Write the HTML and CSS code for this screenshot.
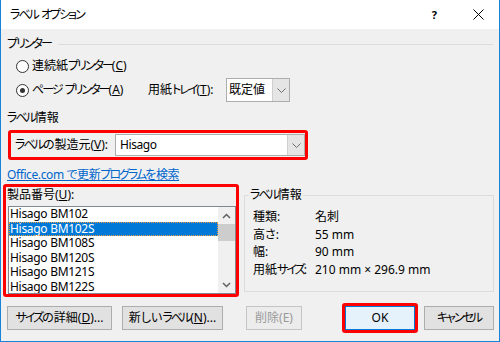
FILE: index.html
```html
<!DOCTYPE html>
<html lang="ja">
<head>
    <meta charset="UTF-8">
    <title>ラベル オプション</title>
    <link rel="stylesheet" href="styles.css">
</head>
<body>
    <div class="window">
        <div class="titlebar">
            <span class="title"><span class="k">ラベル</span> <span class="k">オプション</span></span>
            <span class="help">?</span>
            <svg class="close" width="11" height="11" viewBox="0 0 11 11">
                <path d="M0.5 0.5 L10.5 10.5 M10.5 0.5 L0.5 10.5" stroke="#000" stroke-width="1" fill="none"/>
            </svg>
        </div>

        <div class="content">
            <div class="group-head"><span class="k">プリンター</span></div>

            <div class="radio-row">
                <span class="radio"></span>
                <span class="radio-label">連続紙<span class="k">プリンター</span>(<u>C</u>)</span>
            </div>

            <div class="radio-row">
                <span class="radio checked"></span>
                <span class="radio-label"><span class="k">ページ</span> <span class="k">プリンター</span>(<u>A</u>)</span>
                <span class="tray-label">用紙<span class="k">トレイ</span>(<u>T</u>):</span>
                <div class="select tray">
                    <span class="value">既定値</span>
                    <span class="drop">
                        <svg width="9" height="5" viewBox="0 0 9 5"><path d="M0.5 0.5 L4.5 4.5 L8.5 0.5" stroke="#6d6d6d" fill="none"/></svg>
                    </span>
                </div>
            </div>

            <div class="section-label"><span class="k">ラベル</span>情報</div>

            <div class="mark maker">
                <span><span class="k">ラベル</span>の製造元(<u>V</u>):</span>
                <div class="select vendor">
                    <span class="value">Hisago</span>
                    <span class="drop">
                        <svg width="9" height="5" viewBox="0 0 9 5"><path d="M0.5 0.5 L4.5 4.5 L8.5 0.5" stroke="#6d6d6d" fill="none"/></svg>
                    </span>
                </div>
            </div>

            <a class="link" href="#">Office.com で更新<span class="k">プログラム</span>を検索</a>

            <div class="lower">
                <div class="mark product">
                    <div class="product-label">製品番号(<u>U</u>):</div>
                    <div class="listbox">
                        <div class="items">
                            <div class="item">Hisago BM102</div>
                            <div class="item selected">Hisago BM102S</div>
                            <div class="item">Hisago BM108S</div>
                            <div class="item">Hisago BM120S</div>
                            <div class="item">Hisago BM121S</div>
                            <div class="item">Hisago BM122S</div>
                        </div>
                        <div class="scrollbar">
                            <span class="arrow">
                                <svg width="9" height="6" viewBox="0 0 9 6"><path d="M1 5 L4.5 1.5 L8 5" stroke="#606060" stroke-width="1.5" fill="none"/></svg>
                            </span>
                            <span class="thumb"></span>
                            <span class="track"></span>
                            <span class="arrow">
                                <svg width="9" height="6" viewBox="0 0 9 6"><path d="M1 1 L4.5 4.5 L8 1" stroke="#606060" stroke-width="1.5" fill="none"/></svg>
                            </span>
                        </div>
                    </div>
                </div>

                <fieldset class="info">
                    <legend><span class="k">ラベル</span>情報</legend>
                    <div class="info-grid">
                        <span>種類:</span><span>名刺</span>
                        <span>高さ:</span><span>55 mm</span>
                        <span>幅:</span><span>90 mm</span>
                        <span>用紙<span class="k">サイズ</span>:</span><span>210 mm × 296.9 mm</span>
                    </div>
                </fieldset>
            </div>

            <div class="buttons">
                <button class="btn btn-details"><span class="k">サイズ</span>の詳細(<u>D</u>)...</button>
                <button class="btn btn-new">新しい<span class="k">ラベル</span>(<u>N</u>)...</button>
                <button class="btn btn-delete" disabled>削除(E)</button>
                <div class="mark ok-wrap">
                    <button class="btn btn-ok">OK</button>
                </div>
                <button class="btn btn-cancel"><span class="k">キャンセル</span></button>
            </div>
        </div>
    </div>
</body>
</html>
```

FILE: styles.css
```css
* {
    box-sizing: border-box;
}

body {
    margin: 0;
    font-family: "Noto Sans", "Noto Sans CJK JP", sans-serif;
    font-size: 12px;
    line-height: 16px;
    color: #000;
    font-feature-settings: "palt";
}

/* katakana runs: Meiryo UI draws them much narrower than Noto */
.k {
    letter-spacing: -2px;
}

u {
    text-decoration-thickness: 1px;
    text-underline-offset: 1px;
}

.window {
    width: 500px;
    height: 342px;
    border: 1px solid #1883d7;
    border-top: none;
    background: #f0f0f0;
    display: flex;
    flex-direction: column;
}

.titlebar {
    height: 29px;
    flex-shrink: 0;
    background: #fff;
    display: flex;
    align-items: center;
    padding: 0 15px 0 9px;
}

.title {
    flex: 1;
}

.help {
    margin-right: 36px;
    font-weight: bold;
    font-size: 11px;
}

.content {
    flex: 1;
    padding: 0 6px;
    display: flex;
    flex-direction: column;
}

.group-head {
    margin-top: 5px;
    height: 20px;
    display: flex;
    align-items: center;
    gap: 7px;
}

.group-head::after {
    content: "";
    flex: 1;
    border-top: 1px solid #dcdcdc;
}

.radio-row {
    height: 24px;
    display: flex;
    align-items: center;
    padding-left: 9px;
}

.radio {
    width: 13px;
    height: 13px;
    border: 1px solid #333;
    border-radius: 50%;
    background: #fff;
    margin-right: 3px;
    display: flex;
    align-items: center;
    justify-content: center;
}

.radio.checked::after {
    content: "";
    width: 5px;
    height: 5px;
    border-radius: 50%;
    background: #333;
}

.radio-label {
    width: 116px;
}

.tray-label {
    width: 78px;
}

.select {
    background: #fff;
    border: 1px solid #adadad;
    display: flex;
}

.select .value {
    flex: 1;
    display: flex;
    align-items: center;
}

.select .drop {
    width: 17px;
    background: #e5e5e5;
    border-left: 1px solid #cfcfcf;
    display: flex;
    align-items: center;
    justify-content: center;
}

.tray {
    width: 64px;
    height: 24px;
}

.tray .value {
    padding-left: 2px;
}

.section-label {
    margin-top: 6px;
    height: 20px;
    line-height: 20px;
}

.mark {
    border: 3px solid #f00;
    border-radius: 3px;
}

.maker {
    margin: 2px 0 0 1px;
    width: 300px;
    height: 30px;
    padding-left: 4px;
    display: flex;
    align-items: center;
    justify-content: space-between;
}

.vendor {
    width: 190px;
    height: 22px;
}

.vendor .value {
    padding-left: 4px;
    letter-spacing: -0.4px;
}

.link {
    margin-top: 6px;
    height: 18px;
    line-height: 18px;
    color: #0066cc;
    align-self: flex-start;
    letter-spacing: -0.4px;
}

.link .k {
    letter-spacing: -2px;
}

.lower {
    height: 113px;
    display: flex;
    align-items: flex-start;
}

.product {
    flex-shrink: 0;
    margin-left: -4px;
    width: 236px;
    height: 113px;
    padding-left: 1px;
}

.product-label {
    height: 16px;
}

.listbox {
    margin: 3px 0 0 1px;
    width: 228px;
    height: 88px;
    border: 1px solid #828790;
    background: #fff;
    display: flex;
    overflow: hidden;
}

.items {
    flex: 1;
}

.item {
    height: 14.5px;
    line-height: 14.5px;
    padding-left: 1px;
    white-space: nowrap;
    letter-spacing: -0.3px;
}

.item.selected {
    background: #0078d7;
    color: #fff;
    outline: 1px dotted #e8a040;
    outline-offset: -1px;
}

.scrollbar {
    width: 17px;
    background: #f0f0f0;
    display: flex;
    flex-direction: column;
}

.scrollbar .arrow {
    height: 17px;
    display: flex;
    align-items: center;
    justify-content: center;
}

.scrollbar .thumb {
    height: 17px;
    background: #cdcdcd;
}

.scrollbar .track {
    flex: 1;
}

.info {
    flex-shrink: 0;
    margin: 3px 0 0 5px;
    width: 250px;
    height: 105px;
    border: 1px solid #dcdcdc;
    padding: 0 8px;
    min-inline-size: 0;
}

.info legend {
    padding: 0 1px;
    margin-left: -4px;
    line-height: 16px;
}

.info-grid {
    margin-top: 5px;
    display: grid;
    grid-template-columns: 62px auto;
    grid-auto-rows: 17.7px;
    align-items: center;
}

.buttons {
    margin-top: 6px;
    height: 30px;
    display: flex;
    align-items: center;
}

.btn {
    height: 24px;
    padding: 0;
    border: 1px solid #adadad;
    background: #e1e1e1;
    font: inherit;
    color: #000;
    display: flex;
    align-items: center;
    justify-content: center;
    flex-shrink: 0;
}

.btn-details {
    width: 105px;
}

.btn-new {
    margin-left: 10px;
    width: 101px;
}

.btn-delete {
    margin-left: 23px;
    width: 56px;
    background: #ececec;
    border-color: #c4c4c4;
    color: #9a9a9a;
}

.ok-wrap {
    margin-left: 40px;
    width: 76px;
    height: 30px;
    flex-shrink: 0;
}

.btn-ok {
    width: 70px;
    background: #e5f1fb;
    border-color: #0078d7;
}

.btn-cancel {
    margin-left: 6px;
    width: 70px;
}
```
